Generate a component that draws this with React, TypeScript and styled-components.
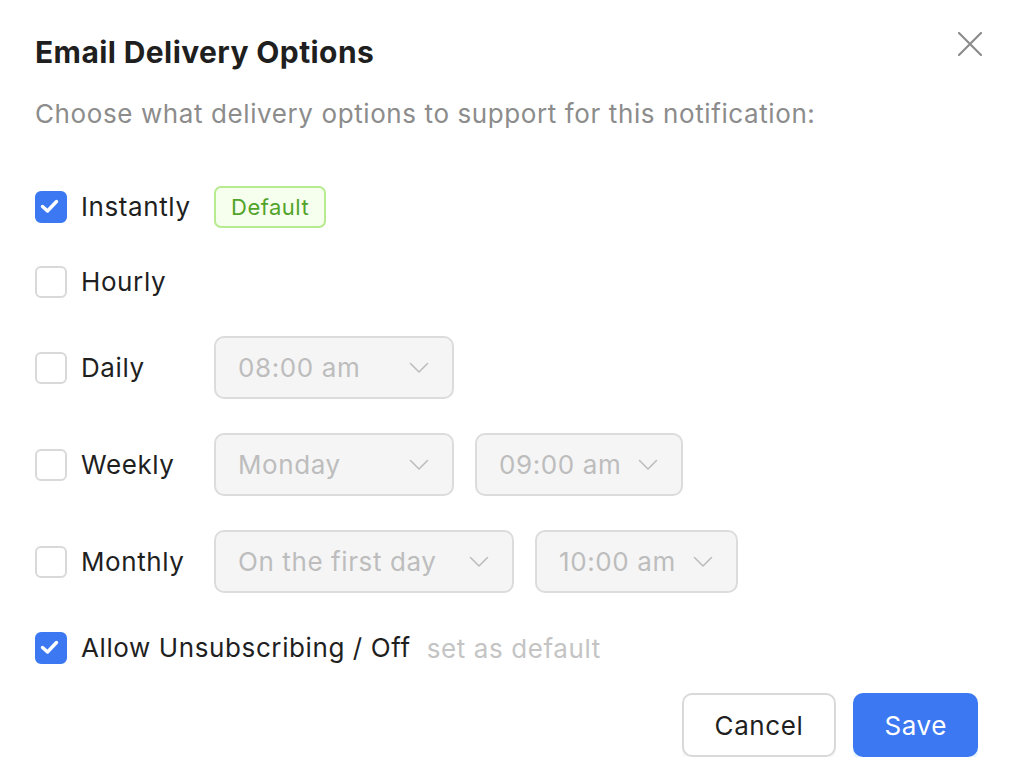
import React from "react";
import styled, { createGlobalStyle } from "styled-components";

const Global = createGlobalStyle`
  html, body { margin: 0; padding: 0; background: #ffffff; }
  body { font-family: Inter, "Noto Sans", "Liberation Sans", sans-serif; -webkit-font-smoothing: antialiased; }
  * { box-sizing: border-box; }
`;

const Dialog = styled.div`
  width: 1014px;
  padding: 34px 32px 0 35px;
  display: flex;
  flex-direction: column;
`;

const Header = styled.div`
  display: flex;
  justify-content: space-between;
  align-items: flex-start;
`;

const Title = styled.h1`
  margin: 0;
  font-size: 30px;
  line-height: 36px;
  font-weight: 700;
  color: #1f1f1f;
  letter-spacing: 0.4px;
`;

const CloseButton = styled.button`
  border: none;
  background: none;
  padding: 0;
  margin-top: -2px;
  width: 24px;
  height: 24px;
  cursor: pointer;
  display: flex;
`;

const Subtitle = styled.p`
  margin: 26px 0 0;
  font-size: 26px;
  line-height: 36px;
  color: #8c8c8c;
  letter-spacing: 0.6px;
`;

const Options = styled.div`
  margin-top: 54px;
  display: flex;
  flex-direction: column;
  gap: 34px;
`;

const Row = styled.div<{ $gap?: number }>`
  display: flex;
  align-items: center;
  min-height: 40px;
  margin-top: ${(p) => p.$gap ?? 0}px;
`;

const Box = styled.span<{ $checked?: boolean }>`
  width: 32px;
  height: 32px;
  flex: none;
  border-radius: 6px;
  border: 2px solid ${(p) => (p.$checked ? "#3b78f2" : "#d9d9d9")};
  background: ${(p) => (p.$checked ? "#3b78f2" : "#ffffff")};
  display: flex;
  align-items: center;
  justify-content: center;
  overflow: visible;

  svg { flex: none; margin: -2px; }
`;

const Label = styled.span`
  margin-left: 14px;
  min-width: 133px;
  font-size: 26px;
  line-height: 40px;
  color: #1f1f1f;
  letter-spacing: 0.6px;
`;

const Badge = styled.span`
  height: 42px;
  padding: 0 15px;
  border: 2px solid #b7eb8f;
  background: #f6ffed;
  color: #52a32a;
  border-radius: 7px;
  font-size: 22px;
  letter-spacing: 0.5px;
  display: flex;
  align-items: center;
`;

const Hint = styled.span`
  margin-left: 16px;
  font-size: 26px;
  color: #c4c4c4;
  letter-spacing: 0.6px;
`;

const Selects = styled.div`
  display: flex;
  gap: 21px;
`;

const Select = styled.div<{ $width: number }>`
  width: ${(p) => p.$width}px;
  height: 63px;
  padding: 0 23px 0 22px;
  border: 2px solid #dcdcdc;
  border-radius: 10px;
  background: #f5f5f5;
  display: flex;
  align-items: center;
  justify-content: space-between;
  font-size: 26px;
  letter-spacing: 0.6px;
  color: #bdbdbd;
`;

const Footer = styled.div`
  margin-top: 25px;
  padding-right: 4px;
  display: flex;
  justify-content: flex-end;
  gap: 17px;
`;

const Button = styled.button<{ $primary?: boolean }>`
  height: 64px;
  padding: 0 ${(p) => (p.$primary ? 29 : 31)}px;
  border-radius: 10px;
  font-family: inherit;
  font-size: 26px;
  letter-spacing: 0.6px;
  border: 2px solid ${(p) => (p.$primary ? "#3b78f2" : "#d9d9d9")};
  background: ${(p) => (p.$primary ? "#3b78f2" : "#ffffff")};
  color: ${(p) => (p.$primary ? "#ffffff" : "#1f1f1f")};
  box-shadow: 0 4px 0 ${(p) => (p.$primary ? "rgba(5,145,255,0.1)" : "rgba(0,0,0,0.02)")};
  cursor: pointer;
`;

const Check = () => (
  <svg width="32" height="32" viewBox="0 0 32 32">
    <path d="M7.5 15.5 L12.5 20 L21.5 10.5" fill="none" stroke="#fff" strokeWidth="3.4" strokeLinecap="round" strokeLinejoin="round" />
  </svg>
);

const Chevron = () => (
  <svg width="20" height="12" viewBox="0 0 20 12">
    <path d="M1.5 1.5 L10 10 L18.5 1.5" fill="none" stroke="#bdbdbd" strokeWidth="1.6" strokeLinecap="round" strokeLinejoin="round" />
  </svg>
);

const Checkbox = ({ checked }: { checked?: boolean }) => (
  <Box $checked={checked}>{checked && <Check />}</Box>
);

const Dropdown = ({ value, width }: { value: string; width: number }) => (
  <Select $width={width}>
    <span>{value}</span>
    <Chevron />
  </Select>
);

export default function App() {
  return (
    <>
      <Global />
      <Dialog>
        <Header>
          <Title>Email Delivery Options</Title>
          <CloseButton aria-label="Close">
            <svg width="24" height="24" viewBox="0 0 24 24">
              <path d="M1 1 L23 23 M23 1 L1 23" stroke="#8c8c8c" strokeWidth="2.2" strokeLinecap="round" />
            </svg>
          </CloseButton>
        </Header>
        <Subtitle>Choose what delivery options to support for this notification:</Subtitle>
        <Options>
          <Row>
            <Checkbox checked />
            <Label>Instantly</Label>
            <Badge>Default</Badge>
          </Row>
          <Row>
            <Checkbox />
            <Label>Hourly</Label>
          </Row>
          <Row>
            <Checkbox />
            <Label>Daily</Label>
            <Dropdown value="08:00 am" width={240} />
          </Row>
          <Row>
            <Checkbox />
            <Label>Weekly</Label>
            <Selects>
              <Dropdown value="Monday" width={240} />
              <Dropdown value="09:00 am" width={208} />
            </Selects>
          </Row>
          <Row>
            <Checkbox />
            <Label>Monthly</Label>
            <Selects>
              <Dropdown value="On the first day" width={300} />
              <Dropdown value="10:00 am" width={203} />
            </Selects>
          </Row>
          <Row $gap={1}>
            <Checkbox checked />
            <Label>Allow Unsubscribing / Off</Label>
            <Hint>set as default</Hint>
          </Row>
        </Options>
        <Footer>
          <Button>Cancel</Button>
          <Button $primary>Save</Button>
        </Footer>
      </Dialog>
    </>
  );
}
